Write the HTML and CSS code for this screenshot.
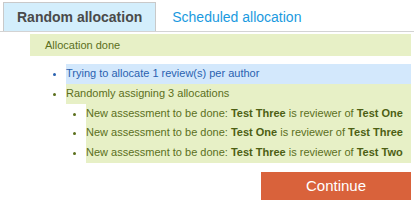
FILE: index.html
```html
<!DOCTYPE html>
<html lang="en">
<head>
  <meta charset="UTF-8">
  <title>Allocation</title>
  <link rel="stylesheet" href="styles.css">
</head>
<body>

  <!-- Tabs -->
  <ul class="tabs">
    <li class="tab active">Random allocation</li>
    <li class="tab"><a href="#">Scheduled allocation</a></li>
  </ul>

  <!-- Result -->
  <div class="result">
    <div class="notice success">Allocation done</div>

    <ul class="log">
      <li class="info"><div class="msg">Trying to allocate 1 review(s) per author</div></li>
      <li class="ok">
        <div class="msg">Randomly assigning 3 allocations</div>
        <ul>
          <li class="ok"><div class="msg">New assessment to be done: <b>Test Three</b> is reviewer of <b>Test One</b></div></li>
          <li class="ok"><div class="msg">New assessment to be done: <b>Test One</b> is reviewer of <b>Test Three</b></div></li>
          <li class="ok"><div class="msg">New assessment to be done: <b>Test Three</b> is reviewer of <b>Test Two</b></div></li>
        </ul>
      </li>
    </ul>

    <div class="actions">
      <button class="continue-btn">Continue</button>
    </div>
  </div>

</body>
</html>
```

FILE: styles.css
```css
* {
  margin: 0;
  padding: 0;
  box-sizing: border-box;
}

body {
  font-family: "Liberation Sans", Arial, sans-serif;
  font-size: 11px;
  background: #fff;
  color: #333;
}

/* Tabs */
.tabs {
  list-style: none;
  display: flex;
  padding: 2px 0 0 3px;
  border-bottom: 1px solid #d3d3d3;
}

.tab {
  height: 29px;
  line-height: 28px;
  padding: 0 13px;
  font-size: 14px;
  border: 1px solid transparent;
  border-bottom: none;
}

.tab.active {
  background: #d3eefc;
  border-color: #c9c9c9;
  color: #4a4a4a;
  font-weight: bold;
}

.tab a {
  color: #1a9ae0;
  text-decoration: none;
  padding-left: 2px;
}

/* Result */
.result {
  margin: 2px 3px 0 30px;
}

.notice {
  height: 22px;
  line-height: 22px;
  padding-left: 15px;
}

.success {
  background: #e7f0c6;
  color: #5b6f1c;
}

.log {
  margin-top: 8px;
  padding-left: 36px;
}

.log ul {
  padding-left: 20px;
  list-style: disc;
}

.log li {
  line-height: 19.75px;
}

.log .info {
  color: #2a62b0;
}

.log .info > .msg {
  background: #d3e8fc;
}

.log .ok {
  color: #5b6f1c;
}

.log .ok > .msg {
  background: #e7f0c6;
}

.log b {
  color: #4d5f14;
}

/* Button */
.actions {
  display: flex;
  justify-content: flex-end;
  margin-top: 9px;
}

.continue-btn {
  width: 150px;
  height: 28px;
  background: #d9623b;
  color: #fff;
  border: none;
  font-family: inherit;
  font-size: 15px;
  cursor: pointer;
}
```
